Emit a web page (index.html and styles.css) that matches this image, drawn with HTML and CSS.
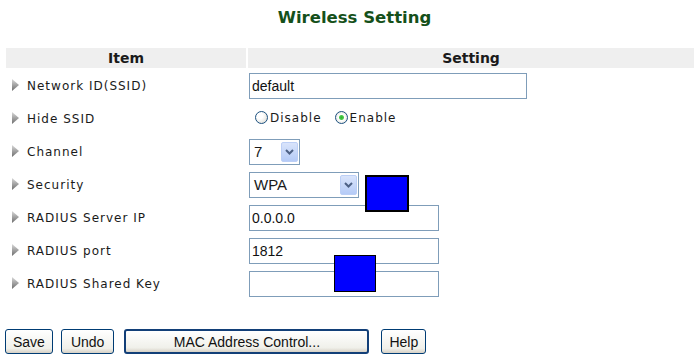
FILE: index.html
```html
<!DOCTYPE html>
<html lang="en">
<head>
    <meta charset="UTF-8">
    <title>Wireless Setting</title>
    <link rel="stylesheet" href="styles.css">
</head>
<body>
    <h1 class="page-title">Wireless Setting</h1>

    <table class="setting-table">
        <tr>
            <th class="col-item">Item</th>
            <th class="col-setting">Setting</th>
        </tr>
        <tr>
            <td class="item"><svg class="arrow" width="7" height="12" viewBox="0 0 7 12"><defs><linearGradient id="ag" x1="0" y1="0" x2="0" y2="1"><stop offset="0" stop-color="#d8d8d8"/><stop offset="1" stop-color="#6e6e6e"/></linearGradient></defs><polygon points="0,0 7,6 0,12" fill="url(#ag)"/></svg>Network ID(SSID)</td>
            <td class="setting"><input class="text-box wide" type="text" value="default"></td>
        </tr>
        <tr>
            <td class="item"><svg class="arrow" width="7" height="12" viewBox="0 0 7 12"><polygon points="0,0 7,6 0,12" fill="url(#ag)"/></svg>Hide SSID</td>
            <td class="setting">
                <label class="radio-label"><input class="radio" type="radio" name="hide">Disable</label>
                <label class="radio-label"><input class="radio" type="radio" name="hide" checked>Enable</label>
            </td>
        </tr>
        <tr>
            <td class="item"><svg class="arrow" width="7" height="12" viewBox="0 0 7 12"><polygon points="0,0 7,6 0,12" fill="url(#ag)"/></svg>Channel</td>
            <td class="setting">
                <div class="select-box channel">
                    <span class="select-value">7</span>
                    <span class="drop-btn"><svg width="9" height="6" viewBox="0 0 9 6"><polyline points="1,1 4.5,4.5 8,1" fill="none" stroke="#4d6185" stroke-width="2"/></svg></span>
                </div>
            </td>
        </tr>
        <tr>
            <td class="item"><svg class="arrow" width="7" height="12" viewBox="0 0 7 12"><polygon points="0,0 7,6 0,12" fill="url(#ag)"/></svg>Security</td>
            <td class="setting cell-rel">
                <div class="select-box security">
                    <span class="select-value">WPA</span>
                    <span class="drop-btn"><svg width="9" height="6" viewBox="0 0 9 6"><polyline points="1,1 4.5,4.5 8,1" fill="none" stroke="#4d6185" stroke-width="2"/></svg></span>
                </div>
                <div class="blue-box box-one"></div>
            </td>
        </tr>
        <tr>
            <td class="item"><svg class="arrow" width="7" height="12" viewBox="0 0 7 12"><polygon points="0,0 7,6 0,12" fill="url(#ag)"/></svg>RADIUS Server IP</td>
            <td class="setting"><input class="text-box" type="text" value="0.0.0.0"></td>
        </tr>
        <tr>
            <td class="item"><svg class="arrow" width="7" height="12" viewBox="0 0 7 12"><polygon points="0,0 7,6 0,12" fill="url(#ag)"/></svg>RADIUS port</td>
            <td class="setting cell-rel">
                <input class="text-box" type="text" value="1812">
                <div class="blue-box box-two"></div>
            </td>
        </tr>
        <tr>
            <td class="item"><svg class="arrow" width="7" height="12" viewBox="0 0 7 12"><polygon points="0,0 7,6 0,12" fill="url(#ag)"/></svg>RADIUS Shared Key</td>
            <td class="setting"><input class="text-box" type="text" value=""></td>
        </tr>
    </table>

    <div class="button-bar">
        <button class="btn">Save</button>
        <button class="btn btn-undo">Undo</button>
        <button class="btn btn-default">MAC Address Control...</button>
        <button class="btn">Help</button>
    </div>
</body>
</html>
```

FILE: styles.css
```css
body {
    margin: 0;
    font-family: "DejaVu Sans", Verdana, sans-serif;
    background-color: white;
    color: #1a1a1a;
    overflow: hidden;
}
.page-title {
    font-size: 16.5px;
    font-weight: bold;
    color: #15501a;
    text-align: center;
    margin: 0;
    padding-top: 8px;
    padding-left: 14px;
    height: 46px;
    box-sizing: border-box;
}
.setting-table {
    border-spacing: 2px;
    margin-left: 4px;
    width: 692px;
}
.setting-table th {
    background-color: #efefef;
    font-size: 14px;
    height: 20px;
    padding: 0;
}
.col-item {
    width: 240px;
}
.setting-table td {
    height: 31px;
    padding: 0;
    vertical-align: middle;
}
.item {
    font-size: 12px;
    letter-spacing: 1px;
    padding-left: 6px !important;
    white-space: nowrap;
}
.arrow {
    vertical-align: -1px;
    margin-right: 8px;
}
.setting {
    padding-left: 1px !important;
}
.cell-rel {
    position: relative;
}
.text-box {
    font-family: "Liberation Sans", Arial, sans-serif;
    font-size: 14px;
    color: #111;
    width: 190px;
    height: 26px;
    box-sizing: border-box;
    border: 1px solid #7f9db9;
    padding: 1px 2px 0;
    margin: 0;
    display: block;
}
.text-box.wide {
    width: 278px;
}
.radio-label {
    font-size: 12px;
    letter-spacing: 1px;
    margin-left: 6px;
    display: inline-flex;
    align-items: center;
}
.radio-label + .radio-label {
    margin-left: 8px;
}
.radio {
    appearance: none;
    width: 13px;
    height: 13px;
    margin: 0 2px 0 0;
    border: 1px solid #1c5180;
    border-radius: 50%;
    background: radial-gradient(circle at 35% 35%, #ffffff 30%, #d4d4cc 100%);
    box-sizing: border-box;
}
.radio:checked {
    background: radial-gradient(circle, #2fb52f 0, #4cc94c 2px, #ffffff 3px, #ffffff 40%, #d4d4cc 100%);
}
.select-box {
    display: flex;
    align-items: center;
    justify-content: space-between;
    height: 26px;
    box-sizing: border-box;
    border: 1px solid #7f9db9;
    padding: 1px;
    font-family: "Liberation Sans", Arial, sans-serif;
    font-size: 15px;
    background-color: white;
}
.select-box.channel {
    width: 51px;
}
.select-box.security {
    width: 110px;
}
.select-value {
    padding-left: 3px;
}
.drop-btn {
    width: 17px;
    height: 20px;
    display: flex;
    align-items: center;
    justify-content: center;
    background: linear-gradient(to bottom, #d9e4fb, #b5cbf7);
    border: 1px solid #bccff6;
    border-radius: 2px;
    box-sizing: border-box;
}
.blue-box {
    position: absolute;
    background-color: #0000ff;
    box-sizing: border-box;
}
.box-one {
    left: 117px;
    top: 6px;
    width: 44px;
    height: 37px;
    border: 2px solid black;
}
.box-two {
    left: 86px;
    top: 20px;
    width: 42px;
    height: 37px;
    border: 1px solid black;
}
.button-bar {
    display: flex;
    margin-top: 28px;
    padding-left: 5px;
}
.btn {
    font-family: "Liberation Sans", Arial, sans-serif;
    font-size: 14px;
    height: 25px;
    padding: 0 7px;
    border: 1px solid #003c74;
    border-radius: 3px;
    background: linear-gradient(to bottom, #ffffff, #f0f0ea 80%, #d6d0c5);
    color: #111;
    margin-right: 8px;
}
.btn-undo {
    padding: 0 9px;
    margin-right: 10px;
}
.btn-default {
    width: 245px;
    border: 2px solid #123f78;
    margin-right: 12px;
}
```
